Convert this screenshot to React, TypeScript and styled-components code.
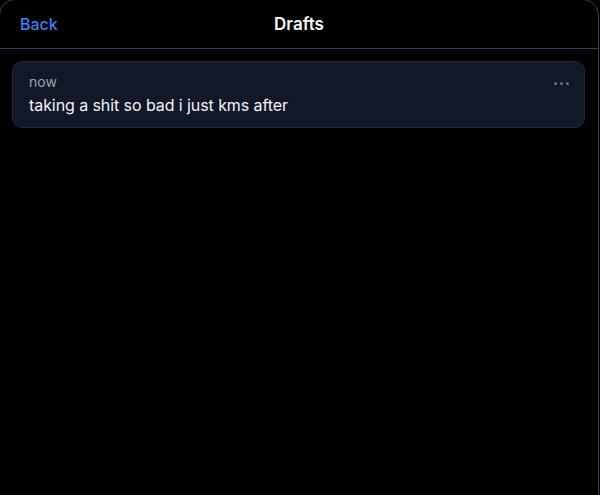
import styled, { createGlobalStyle } from "styled-components";

const GlobalStyle = createGlobalStyle`
  html, body {
    margin: 0;
    padding: 0;
    background: #000;
    overflow: hidden;
  }
  body {
    font-family: Inter, "Noto Sans", sans-serif;
  }
`;

const Frame = styled.div`
  box-sizing: border-box;
  width: 600px;
  height: 520px;
  margin: -1px 0 0 -1px;
  background: #000;
  border: 1px solid #334155;
  border-radius: 16px 16px 0 0;
  display: flex;
  flex-direction: column;
`;

const Header = styled.header`
  position: relative;
  height: 48px;
  display: flex;
  align-items: center;
  justify-content: center;
  border-bottom: 1px solid #334155;
`;

const BackButton = styled.button`
  position: absolute;
  left: 20px;
  top: 50%;
  transform: translateY(-50%);
  background: none;
  border: 0;
  padding: 0;
  font-family: inherit;
  font-size: 16px;
  font-weight: 500;
  color: #3b82f6;
  cursor: pointer;
`;

const Title = styled.h1`
  margin: 0;
  font-size: 17px;
  font-weight: 600;
  color: #f9fafb;
`;

const List = styled.div`
  display: flex;
  flex-direction: column;
  gap: 10px;
  padding: 12px 13px 12px 12px;
`;

const DraftCard = styled.div`
  position: relative;
  box-sizing: border-box;
  height: 67px;
  padding: 11px 16px;
  background: #111827;
  border: 1px solid #1f2937;
  border-radius: 10px;
  display: flex;
  flex-direction: column;
  gap: 3px;
`;

const Time = styled.span`
  font-size: 14px;
  color: #9ca3af;
  line-height: 18px;
`;

const Body = styled.span`
  font-size: 16px;
  letter-spacing: -0.08px;
  color: #f3f4f6;
  line-height: 22px;
`;

const MoreButton = styled.button`
  position: absolute;
  top: 20px;
  right: 15px;
  background: none;
  border: 0;
  padding: 0;
  display: flex;
  gap: 3px;
  cursor: pointer;

  span {
    width: 3px;
    height: 3px;
    border-radius: 50%;
    background: #64748b;
  }
`;

const drafts = [{ id: 1, time: "now", text: "taking a shit so bad i just kms after" }];

export default function App() {
  return (
    <>
      <GlobalStyle />
      <Frame>
        <Header>
          <BackButton>Back</BackButton>
          <Title>Drafts</Title>
        </Header>
        <List>
          {drafts.map((d) => (
            <DraftCard key={d.id}>
              <Time>{d.time}</Time>
              <Body>{d.text}</Body>
              <MoreButton aria-label="More">
                <span />
                <span />
                <span />
              </MoreButton>
            </DraftCard>
          ))}
        </List>
      </Frame>
    </>
  );
}
